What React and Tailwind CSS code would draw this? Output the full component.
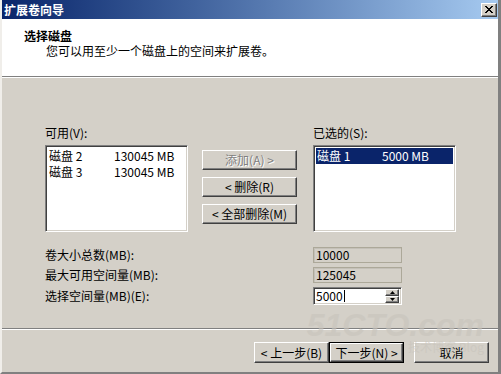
import React from 'react';

const sunken =
    'border border-t-[#808080] border-l-[#808080] border-b-white border-r-white shadow-[inset_1px_1px_0_#404040,inset_-1px_-1px_0_#d4d0c8]';
const raised =
    'border border-t-white border-l-white border-b-[#404040] border-r-[#404040] shadow-[inset_-1px_-1px_0_#808080,inset_1px_1px_0_#d4d0c8]';

const Button = ({ children, disabled, isDefault, className = '' }) => (
    <div className={`${isDefault ? 'border border-black' : ''} ${className}`}>
        <div
            className={`${raised} h-full w-full flex items-center justify-center bg-[#d4d0c8] ${
                disabled ? 'text-[#808080] [text-shadow:1px_1px_0_#fff]' : 'text-black'
            }`}
        >
            {children}
        </div>
    </div>
);

const ListBox = ({ rows }) => (
    <div className={`${sunken} bg-white h-[87px] w-[143px] p-[2px]`}>
        {rows.map((row) => (
            <div
                key={row.name}
                className={`flex h-[16px] items-center ${row.selected ? 'bg-[#0a246a] text-white' : ''}`}
            >
                <span className="w-[66px] pl-[1px]">{row.name}</span>
                <span>{row.size}</span>
            </div>
        ))}
    </div>
);

// read-only number boxes have a flat, lighter frame
const Field = ({ value }) => (
    <div className="border border-[#aca899] shadow-[inset_1px_1px_0_#c4c0b8] bg-[#d4d0c8] h-[16px] w-[89px] flex items-center px-[2px] text-black">
        {value}
    </div>
);

const App = () => {
    return (
        <div
            className="relative w-[501px] h-[374px] overflow-hidden bg-[#d4d0c8] text-[12px] leading-[14px] text-black border-l-2 border-l-[#f0eeea] border-r-[3px] border-r-[#808080] border-b-2 border-b-[#808080]"
            style={{ fontFamily: "'Noto Sans CJK SC', 'Liberation Sans', sans-serif" }}
        >
            {/* Title bar */}
            <div className="h-[19px] flex items-center justify-between bg-gradient-to-r from-[#0a246a] to-[#a6caf0] pl-[2px] pr-[1px]">
                <span className="font-bold text-white text-[12px] leading-[14px]">扩展卷向导</span>
                <div className={`${raised} w-[16px] h-[14px] bg-[#d4d0c8] flex items-center justify-center`}>
                    <svg width="8" height="7" viewBox="0 0 8 7">
                        <path d="M0 0 L7 7 M1 0 L8 7 M7 0 L0 7 M8 0 L1 7" stroke="#000" strokeWidth="1" />
                    </svg>
                </div>
            </div>

            {/* Header */}
            <div className="h-[58px] bg-white border-b border-b-[#808080]">
                <div className="pl-[22px] pt-[10px] font-bold">选择磁盘</div>
                <div className="pl-[44px] pt-[1px]">您可以用至少一个磁盘上的空间来扩展卷。</div>
            </div>
            <div className="h-px bg-white" />

            {/* Body */}
            <div className="h-[250px] pt-[48px] pl-[43px]">
                <div className="flex">
                    <div className="flex flex-col">
                        <div className="h-[19px]">可用(V):</div>
                        <ListBox
                            rows={[
                                { name: '磁盘 2', size: '130045 MB' },
                                { name: '磁盘 3', size: '130045 MB' },
                            ]}
                        />
                    </div>
                    <div className="flex flex-col gap-[7px] pt-[24px] pl-[14px] pr-[16px]">
                        <Button disabled className="w-[95px] h-[20px]">添加(A) &gt;</Button>
                        <Button className="w-[95px] h-[20px]">&lt; 删除(R)</Button>
                        <Button className="w-[95px] h-[20px]">&lt; 全部删除(M)</Button>
                    </div>
                    <div className="flex flex-col">
                        <div className="h-[19px]">已选的(S):</div>
                        <ListBox rows={[{ name: '磁盘 1', size: '5000 MB', selected: true }]} />
                    </div>
                </div>

                <div className="flex flex-col gap-[4px] pt-[15px]">
                    <div className="flex items-center">
                        <span className="w-[268px]">卷大小总数(MB):</span>
                        <Field value="10000" />
                    </div>
                    <div className="flex items-center">
                        <span className="w-[268px]">最大可用空间量(MB):</span>
                        <Field value="125045" />
                    </div>
                    <div className="flex items-center">
                        <span className="w-[268px]">选择空间量(MB)(E):</span>
                        <div className={`${sunken} bg-white h-[18px] w-[89px] flex items-center justify-between pl-[2px] pr-[2px]`}>
                            <span className="flex items-center">
                                5000
                                <span className="inline-block w-px h-[12px] bg-black ml-px" />
                            </span>
                            <div className="flex flex-col">
                                <div className={`${raised} w-[14px] h-[7px] bg-[#d4d0c8] flex items-center justify-center`}>
                                    <svg width="5" height="3" viewBox="0 0 5 3">
                                        <path d="M2.5 0 L5 3 L0 3 Z" fill="#000" />
                                    </svg>
                                </div>
                                <div className={`${raised} w-[14px] h-[7px] bg-[#d4d0c8] flex items-center justify-center`}>
                                    <svg width="5" height="3" viewBox="0 0 5 3">
                                        <path d="M0 0 L5 0 L2.5 3 Z" fill="#000" />
                                    </svg>
                                </div>
                            </div>
                        </div>
                    </div>
                </div>
            </div>

            {/* Footer separator */}
            <div className="h-px bg-[#808080]" />
            <div className="h-px bg-white" />

            {/* Footer buttons */}
            <div className="flex pt-[12px] pl-[252px]">
                <Button className="w-[75px] h-[21px]">&lt; 上一步(B)</Button>
                <Button isDefault className="w-[75px] h-[21px]">下一步(N) &gt;</Button>
                <Button className="w-[75px] h-[21px] ml-[10px]">取消</Button>
            </div>

            {/* Watermark */}
            <div className="absolute right-[14px] bottom-[19px] flex flex-col items-end pointer-events-none select-none text-[#c8c4bc] opacity-60">
                <span className="font-bold italic text-[32px] leading-[30px]" style={{ fontFamily: "'Liberation Sans', sans-serif" }}>
                    51CTO.com
                </span>
                <span className="text-[12px] leading-[13px]">技术博客 Blog</span>
            </div>
        </div>
    );
};

export default App;
